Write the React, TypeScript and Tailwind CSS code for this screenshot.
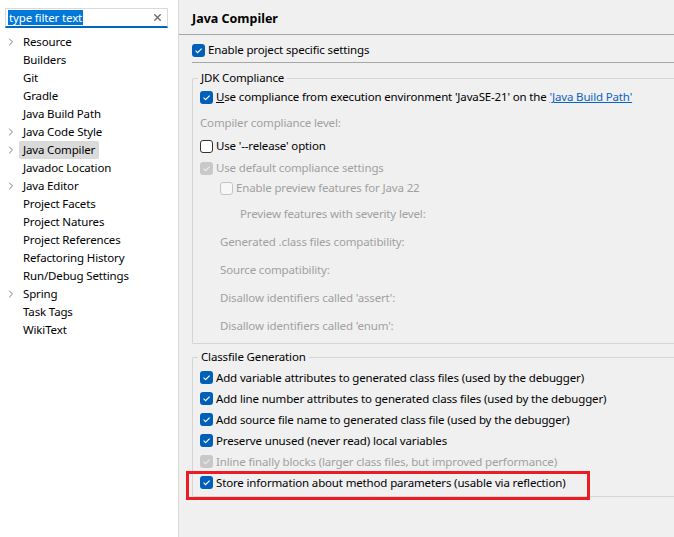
import { ChevronRight, X } from 'lucide-react'

type BoxState = 'on' | 'off' | 'dis' | 'disoff'

const treeItems = [
  { label: 'Resource', arrow: true },
  { label: 'Builders' },
  { label: 'Git' },
  { label: 'Gradle' },
  { label: 'Java Build Path' },
  { label: 'Java Code Style', arrow: true },
  { label: 'Java Compiler', arrow: true, selected: true },
  { label: 'Javadoc Location' },
  { label: 'Java Editor', arrow: true },
  { label: 'Project Facets' },
  { label: 'Project Natures' },
  { label: 'Project References' },
  { label: 'Refactoring History' },
  { label: 'Run/Debug Settings' },
  { label: 'Spring', arrow: true },
  { label: 'Task Tags' },
  { label: 'WikiText' },
]

const classfileOptions: { label: string; state: BoxState }[] = [
  { label: 'Add variable attributes to generated class files (used by the debugger)', state: 'on' },
  { label: 'Add line number attributes to generated class files (used by the debugger)', state: 'on' },
  { label: 'Add source file name to generated class file (used by the debugger)', state: 'on' },
  { label: 'Preserve unused (never read) local variables', state: 'on' },
  { label: 'Inline finally blocks (larger class files, but improved performance)', state: 'dis' },
]

function CheckBox({ state }: { state: BoxState }) {
  if (state === 'off' || state === 'disoff') {
    return (
      <span
        className={
          state === 'off'
            ? 'w-[13px] h-[13px] shrink-0 rounded-[3px] border border-[#333333] bg-white'
            : 'w-[13px] h-[13px] shrink-0 rounded-[3px] border border-[#c4c4c4] bg-[#f7f7f7]'
        }
      />
    )
  }
  return (
    <span
      className={
        state === 'on'
          ? 'w-[13px] h-[13px] shrink-0 rounded-[3px] bg-[#005fb8] flex items-center justify-center'
          : 'w-[13px] h-[13px] shrink-0 rounded-[3px] bg-[#c8c8c8] flex items-center justify-center'
      }
    >
      <svg width="13" height="13" viewBox="0 0 13 13" fill="none">
        <path d="M3.6 6.7 L5.6 8.7 L9.6 4.6" stroke={state === 'on' ? '#ffffff' : '#ececec'} strokeWidth="1.1" />
      </svg>
    </span>
  )
}

function Option({ state, children, className = '' }: { state: BoxState; children: React.ReactNode; className?: string }) {
  const muted = state === 'dis' || state === 'disoff'
  return (
    <div className={`flex items-center gap-[3px] whitespace-nowrap ${muted ? 'text-[#a0a0a0]' : 'text-black'} ${className}`}>
      <CheckBox state={state} />
      <span>{children}</span>
    </div>
  )
}

export default function App() {
  return (
    <div
      className="flex w-[674px] h-[537px] overflow-hidden bg-[#f0f0f0] text-[11.5px] tracking-[-0.15px] text-black"
      style={{ fontFamily: '"Noto Sans", "Open Sans", sans-serif' }}
    >
      {/* Left tree */}
      <aside className="w-[179px] shrink-0 bg-white border-r border-[#d8d8d8] pt-[8px]">
        <div className="ml-[5px] w-[163px] h-[20px] border border-[#dadada] border-b-2 border-b-[#0067c0] flex items-center pl-[2px] pr-[4px]">
          <span className="bg-[#0078d7] text-white leading-[15px] px-[1px]">type filter text</span>
          <X className="ml-auto w-[11px] h-[11px] text-[#6b6b6b]" strokeWidth={3} />
        </div>
        <ul className="mt-[5px]">
          {treeItems.map((item, i) => (
            <li key={i} className="h-[18px] flex items-center">
              <span className="w-[19px] flex justify-center pl-[3px]">
                {item.arrow && <ChevronRight className="w-[12px] h-[12px] text-[#7c7c7c]" strokeWidth={2} />}
              </span>
              <span className={`px-[4px] leading-[18px] rounded-[2px] ${item.selected ? 'bg-[#dadada]' : ''}`}>
                {item.label}
              </span>
            </li>
          ))}
        </ul>
      </aside>

      {/* Right page */}
      <main className="flex-1 min-w-0 overflow-hidden">
        <div className="h-[35px] border-b border-[#a6a6a6] flex items-center pl-[13px] pt-[5px] font-bold text-[12.5px] tracking-normal">
          Java Compiler
        </div>

        <div className="ml-[13px]">
          <Option state="on" className="h-[20px] mt-[5px]">Enable project specific settings</Option>
          <div className="mt-[2px] w-[600px] border-t border-[#a6a6a6]" />

          {/* JDK Compliance */}
          <fieldset className="mt-[7px] w-[600px] border border-[#d5d5d5] rounded-[1px]">
            <legend className="ml-[5px] px-[3px] leading-[16px]">JDK Compliance</legend>
            <div className="pl-[7px] pt-[1px] pb-[7px]">
              <div className="flex items-center gap-[3px] whitespace-nowrap h-[20px]">
                <CheckBox state="on" />
                <span>
                  <span className="underline">U</span>se compliance from execution environment 'JavaSE-21' on the{' '}
                  <span className="text-[#0b62c4] underline">'Java Build Path'</span>
                </span>
              </div>
              <div className="h-[20px] mt-[6px] flex items-center text-[#a0a0a0]">Compiler compliance level:</div>
              <Option state="off" className="h-[20px] mt-[3px]">Use '--release' option</Option>
              <Option state="dis" className="h-[20px] mt-[2px]">Use default compliance settings</Option>
              <Option state="disoff" className="h-[20px] pl-[20px]">Enable preview features for Java 22</Option>
              <div className="h-[20px] mt-[6px] pl-[40px] flex items-center text-[#a0a0a0]">Preview features with severity level:</div>
              <div className="h-[20px] mt-[8px] pl-[20px] flex items-center text-[#a0a0a0]">Generated .class files compatibility:</div>
              <div className="h-[20px] mt-[8px] pl-[20px] flex items-center text-[#a0a0a0]">Source compatibility:</div>
              <div className="h-[20px] mt-[8px] pl-[20px] flex items-center text-[#a0a0a0]">Disallow identifiers called 'assert':</div>
              <div className="h-[20px] mt-[8px] pl-[20px] flex items-center text-[#a0a0a0]">Disallow identifiers called 'enum':</div>
            </div>
          </fieldset>

          {/* Classfile Generation */}
          <fieldset className="mt-[5px] w-[600px] border border-[#d5d5d5] rounded-[1px]">
            <legend className="ml-[5px] px-[3px] leading-[16px]">Classfile Generation</legend>
            <div className="pl-[7px] pt-[2px] pb-[3px]">
              {classfileOptions.map((opt, i) => (
                <Option key={i} state={opt.state} className="h-[21px]">
                  {opt.label}
                </Option>
              ))}
              <div className="relative">
                <Option state="on" className="h-[21px]">
                  Store information about method parameters (usable via reflection)
                </Option>
                <div className="absolute -left-[14px] top-[-1px] w-[404px] h-[29px] border-[3px] border-[#ed1c24] pointer-events-none" />
              </div>
            </div>
          </fieldset>
        </div>
      </main>
    </div>
  )
}
